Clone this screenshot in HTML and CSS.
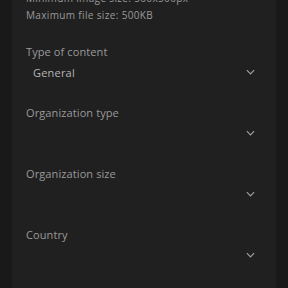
FILE: index.html
```html
<!DOCTYPE html>
<html lang="en">
  <head>
    <meta charset="UTF-8" />
    <meta name="viewport" content="width=device-width, initial-scale=1.0" />
    <title>Profile settings</title>
    <link rel="stylesheet" href="styles.css">
  </head>
  <body>
    <div class="panel">
      <div class="notes">
        <p>Minimum image size: 500x500px</p>
        <p>Maximum file size: 500KB</p>
      </div>

      <div class="field">
        <label class="label">Type of content</label>
        <div class="select">
          <span class="value">General</span>
          <svg class="chev" viewBox="0 0 10 6" width="9" height="6"><path d="M1 1l4 4 4-4" /></svg>
        </div>
      </div>

      <div class="field">
        <label class="label">Organization type</label>
        <div class="select">
          <span class="value"></span>
          <svg class="chev" viewBox="0 0 10 6" width="9" height="6"><path d="M1 1l4 4 4-4" /></svg>
        </div>
      </div>

      <div class="field">
        <label class="label">Organization size</label>
        <div class="select">
          <span class="value"></span>
          <svg class="chev" viewBox="0 0 10 6" width="9" height="6"><path d="M1 1l4 4 4-4" /></svg>
        </div>
      </div>

      <div class="field">
        <label class="label">Country</label>
        <div class="select">
          <span class="value"></span>
          <svg class="chev" viewBox="0 0 10 6" width="9" height="6"><path d="M1 1l4 4 4-4" /></svg>
        </div>
      </div>
    </div>
  </body>
</html>
```

FILE: styles.css
```css
* {
  margin: 0;
  padding: 0;
  box-sizing: border-box;
}
body {
  font-family: "Open Sans", sans-serif;
  background: #191919;
  height: 288px;
  overflow: hidden;
}
.panel {
  display: flow-root;
  margin: 0 12px;
  padding: 0 14px;
  background: #202020;
  height: 288px;
}
.notes {
  margin-top: -10px;
  font-size: 10px;
  letter-spacing: 0.35px;
  color: #9a9a9a;
}
.notes p {
  height: 17px;
  line-height: 17px;
}
.field {
  height: 61px;
  padding-top: 10px;
}
.notes + .field {
  margin-top: 11px;
}
.label {
  display: block;
  font-size: 11px;
  line-height: 14px;
  letter-spacing: 0.1px;
  color: #9a9a9a;
}
.select {
  display: flex;
  justify-content: space-between;
  align-items: center;
  height: 26px;
  padding: 0 7px 0 7px;
}
.value {
  font-size: 11px;
  letter-spacing: 0.2px;
  color: #b5b5b5;
}
.chev {
  fill: none;
  stroke: #a0a0a0;
  stroke-width: 1.3;
}
```
